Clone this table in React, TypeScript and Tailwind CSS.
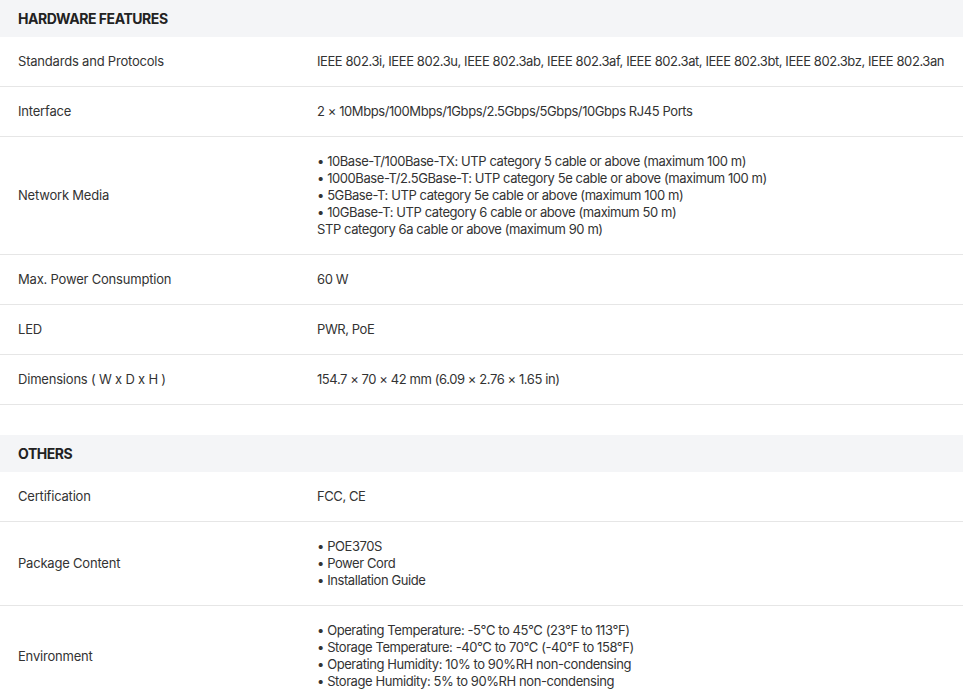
type Row = { label: string; value: string[] };

const hardware: Row[] = [
  {
    label: "Standards and Protocols",
    value: [
      "IEEE 802.3i, IEEE 802.3u, IEEE 802.3ab, IEEE 802.3af, IEEE 802.3at, IEEE 802.3bt, IEEE 802.3bz, IEEE 802.3an",
    ],
  },
  { label: "Interface", value: ["2 × 10Mbps/100Mbps/1Gbps/2.5Gbps/5Gbps/10Gbps RJ45 Ports"] },
  {
    label: "Network Media",
    value: [
      "• 10Base-T/100Base-TX: UTP category 5 cable or above (maximum 100 m)",
      "• 1000Base-T/2.5GBase-T: UTP category 5e cable or above (maximum 100 m)",
      "• 5GBase-T: UTP category 5e cable or above (maximum 100 m)",
      "• 10GBase-T: UTP category 6 cable or above (maximum 50 m)",
      "STP category 6a cable or above (maximum 90 m)",
    ],
  },
  { label: "Max. Power Consumption", value: ["60 W"] },
  { label: "LED", value: ["PWR, PoE"] },
  { label: "Dimensions ( W x D x H )", value: ["154.7 × 70 × 42 mm (6.09 × 2.76 × 1.65 in)"] },
];

const others: Row[] = [
  { label: "Certification", value: ["FCC, CE"] },
  { label: "Package Content", value: ["• POE370S", "• Power Cord", "• Installation Guide"] },
  {
    label: "Environment",
    value: [
      "• Operating Temperature: -5°C to 45°C (23°F to 113°F)",
      "• Storage Temperature: -40°C to 70°C (-40°F to 158°F)",
      "• Operating Humidity: 10% to 90%RH non-condensing",
      "• Storage Humidity: 5% to 90%RH non-condensing",
    ],
  },
];

function SectionHeader({ title }: { title: string }) {
  return (
    <div className="bg-[#f4f5f7] px-[18px] py-[10px] text-[14px] leading-[17px] font-bold tracking-[-0.45px] text-[#222]">
      {title}
    </div>
  );
}

function SpecRow({ row }: { row: Row }) {
  return (
    <div className="flex items-center border-b border-[#e6e6e6] py-4">
      <div className="w-[317px] shrink-0 pl-[18px]">{row.label}</div>
      <div className="tracking-[-0.42px] whitespace-nowrap">
        {row.value.map((line, i) => (
          <div key={i}>{line}</div>
        ))}
      </div>
    </div>
  );
}

export default function App() {
  return (
    <div className="w-[963px] bg-white text-[13px] leading-[17px] tracking-[-0.2px] text-[#333] [font-family:Inter,'Noto_Sans',sans-serif]">
      <SectionHeader title="HARDWARE FEATURES" />
      {hardware.map((r) => (
        <SpecRow key={r.label} row={r} />
      ))}
      <div className="h-[30px]" />
      <SectionHeader title="OTHERS" />
      {others.map((r) => (
        <SpecRow key={r.label} row={r} />
      ))}
    </div>
  );
}
